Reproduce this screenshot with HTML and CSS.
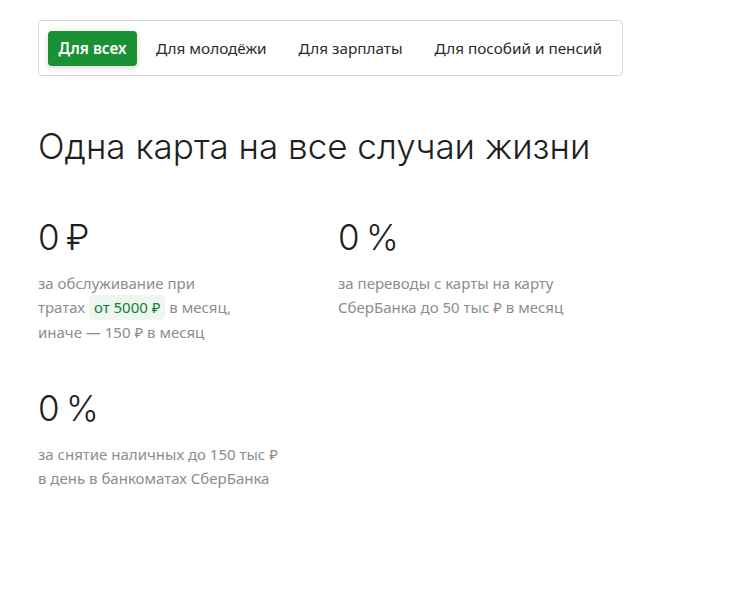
FILE: index.html
```html
<!DOCTYPE html>
<html lang="ru">
<head>
<meta charset="utf-8">
<link rel="stylesheet" href="styles.css">
</head>
<body>
<div class="page">
  <nav class="tabs">
    <span class="tab active">Для всех</span>
    <span class="tab">Для молодёжи</span>
    <span class="tab">Для зарплаты</span>
    <span class="tab">Для пособий и пенсий</span>
  </nav>
  <h1 class="title">Одна карта на все случаи жизни</h1>
  <div class="stats">
    <div class="stat">
      <div class="value">0&#8201;₽</div>
      <p class="desc">за обслуживание при<br>тратах <span class="chip">от 5000 ₽</span> в месяц,<br>иначе — 150 ₽ в месяц</p>
    </div>
    <div class="stat">
      <div class="value">0&#8201;%</div>
      <p class="desc">за переводы с карты на карту<br>СберБанка до 50 тыс ₽ в месяц</p>
    </div>
    <div class="stat">
      <div class="value">0&#8201;%</div>
      <p class="desc">за снятие наличных до 150 тыс ₽<br>в день в банкоматах СберБанка</p>
    </div>
  </div>
</div>
</body>
</html>
```
FILE: styles.css
```css
html, body {
  margin: 0;
  background: #ffffff;
}
.page {
  padding: 20px 38px 0 38px;
  font-family: "Noto Sans", "Open Sans", sans-serif;
}
.tabs {
  display: flex;
  align-items: center;
  width: 565px;
  height: 35px;
  padding: 10px 9px 9px 9px;
  border: 1px solid #d6d6d6;
  border-radius: 4px;
  overflow: hidden;
}
.tab {
  flex-shrink: 0;
  white-space: nowrap;
  padding: 0 16px;
  font-size: 15.3px;
  color: #2b2b2b;
  line-height: 35px;
}
.tab.active {
  padding: 0 10.5px;
  margin-right: 3px;
  background: #1a9135;
  color: #ffffff;
  font-weight: 600;
  border-radius: 4px;
  box-shadow: 0 2px 6px rgba(0, 0, 0, 0.15);
}
.tab:last-child {
  padding-right: 0;
}
.title {
  margin: 48px 0 0 0;
  font-family: "Inter", sans-serif;
  font-weight: 300;
  font-size: 35px;
  line-height: 44px;
  color: #1f1f22;
}
.stats {
  display: grid;
  grid-template-columns: 300px 300px;
  row-gap: 42px;
  margin-top: 47px;
}
.value {
  font-family: "Inter", sans-serif;
  font-weight: 300;
  font-size: 35px;
  line-height: 44px;
  color: #1f1f22;
}
.desc {
  margin: 12px 0 0 0;
  font-size: 15px;
  line-height: 24px;
  color: #8a8d93;
}
.chip {
  display: inline-block;
  padding: 0 5px;
  margin: 0;
  background: #edf7f0;
  color: #107f38;
  border-radius: 5px;
  line-height: 25px;
}
```
